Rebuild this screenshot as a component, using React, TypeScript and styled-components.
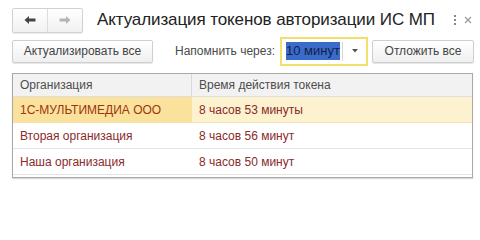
import styled, { createGlobalStyle } from "styled-components";

const GlobalStyle = createGlobalStyle`
    body {
        margin: 0;
        background: #ffffff;
        font-family: Arial, "Liberation Sans", sans-serif;
    }
`;

interface TokenRow {
    org: string;
    time: string;
}

const rows: TokenRow[] = [
    { org: "1С-МУЛЬТИМЕДИА ООО", time: "8 часов 53 минуты" },
    { org: "Вторая организация", time: "8 часов 56 минут" },
    { org: "Наша организация", time: "8 часов 50 минут" },
];

function ArrowIcon({ left, color }: { left?: boolean; color: string }) {
    return (
        <svg width="12" height="10" viewBox="0 0 12 10" style={{ transform: left ? "none" : "scaleX(-1)" }}>
            <path d="M0.5 5 L5 1 L5 3.6 L11.5 3.6 L11.5 6.4 L5 6.4 L5 9 Z" fill={color} />
        </svg>
    );
}

export default function App() {
    return (
        <Page>
            <GlobalStyle />
            <TitleBar>
                <NavGroup>
                    <NavButton><ArrowIcon left color="#444" /></NavButton>
                    <NavButton><ArrowIcon color="#b4b4b4" /></NavButton>
                </NavGroup>
                <Title>Актуализация токенов авторизации ИС МП</Title>
                <WindowTools>
                    <Dots>
                        <i /><i /><i />
                    </Dots>
                    <svg width="8" height="8" viewBox="0 0 8 8">
                        <path d="M1 1 L7 7 M7 1 L1 7" stroke="#9a9a9a" strokeWidth="1.2" />
                    </svg>
                </WindowTools>
            </TitleBar>
            <Toolbar>
                <Button $width={141}>Актуализировать все</Button>
                <Label>Напомнить через:</Label>
                <Combo>
                    <ComboText><Selected>10 минут</Selected></ComboText>
                    <ComboArrow>
                        <svg width="6" height="4" viewBox="0 0 6 4">
                            <path d="M0 0 L6 0 L3 3.5 Z" fill="#555" />
                        </svg>
                    </ComboArrow>
                </Combo>
                <Button $width={102}>Отложить все</Button>
            </Toolbar>
            <Table>
                <HeadRow>
                    <HeadCell $first>Организация</HeadCell>
                    <HeadCell>Время действия токена</HeadCell>
                </HeadRow>
                {rows.map((row, i) => (
                    <Row key={row.org} $current={i === 0}>
                        <Cell $first $current={i === 0}>{row.org}</Cell>
                        <Cell $current={i === 0}>{row.time}</Cell>
                    </Row>
                ))}
                <Filler />
            </Table>
        </Page>
    );
}

const Page = styled.div`
    width: 480px;
    height: 201px;
    padding: 8px 7px 0 12px;
    box-sizing: border-box;
    display: flex;
    flex-direction: column;
    overflow: hidden;
`;

const TitleBar = styled.div`
    display: flex;
    align-items: center;
    height: 24px;
`;

const NavGroup = styled.div`
    display: flex;
    flex-shrink: 0;
    height: 23px;
    border: 1px solid #d2d2d2;
    border-radius: 2px;
    background: linear-gradient(#ffffff, #f1f1f1);
    box-shadow: 0 1px 1px rgba(0, 0, 0, 0.08);
`;

const NavButton = styled.div`
    width: 34px;
    display: flex;
    align-items: center;
    justify-content: center;

    & + & {
        border-left: 1px solid #dcdcdc;
    }
`;

const Title = styled.h1`
    margin: 0 0 0 14px;
    font-size: 17px;
    font-weight: normal;
    color: #222;
    white-space: nowrap;
    letter-spacing: -0.1px;
`;

const WindowTools = styled.div`
    margin-left: auto;
    flex-shrink: 0;
    display: flex;
    align-items: center;
    gap: 8px;
    padding-right: 1px;
`;

const Dots = styled.div`
    display: flex;
    flex-direction: column;
    gap: 2px;

    i {
        display: block;
        width: 2px;
        height: 2px;
        background: #888;
    }
`;

const Toolbar = styled.div`
    display: flex;
    align-items: center;
    margin-top: 4px;
    height: 30px;
    white-space: nowrap;
    font-size: 12px;
`;

const Button = styled.div<{ $width: number }>`
    width: ${(p) => p.$width}px;
    flex-shrink: 0;
    height: 23px;
    box-sizing: border-box;
    border: 1px solid #cfcfcf;
    border-radius: 2px;
    background: linear-gradient(#ffffff, #efefef);
    box-shadow: 0 1px 1px rgba(0, 0, 0, 0.1);
    display: flex;
    align-items: center;
    justify-content: center;
    color: #444;
`;

const Label = styled.span`
    margin-left: 22px;
    flex-shrink: 0;
    color: #4a4a4a;
`;

const Combo = styled.div`
    margin-left: 5px;
    margin-right: 4px;
    width: 88px;
    flex-shrink: 0;
    height: 29px;
    box-sizing: border-box;
    border: 2px solid #f2df6e;
    background: #fff;
    display: flex;
    align-items: stretch;
`;

const ComboText = styled.div`
    flex: 1;
    display: flex;
    align-items: center;
    padding-left: 4px;
    font-size: 13px;
`;

const Selected = styled.span`
    background: #3a6bc8;
    color: #10214a;
    padding: 1px 0;
    line-height: 16px;
`;

const ComboArrow = styled.div`
    width: 23px;
    display: flex;
    align-items: center;
    justify-content: center;
    margin: 3px 0;
    border-left: 1px solid #d6d6d6;
`;

const Table = styled.div`
    margin-top: 7px;
    width: 461px;
    height: 105px;
    box-sizing: border-box;
    border: 1px solid #a9a9a9;
    box-shadow: 0 1px 1px rgba(0, 0, 0, 0.15);
    display: flex;
    flex-direction: column;
    font-size: 12px;
`;

const HeadRow = styled.div`
    display: flex;
    height: 22px;
    background: #f2f2f2;
    border-bottom: 1px solid #dedede;
`;

const HeadCell = styled.div<{ $first?: boolean }>`
    width: ${(p) => (p.$first ? "179px" : "auto")};
    flex: ${(p) => (p.$first ? "none" : "1")};
    box-sizing: border-box;
    padding-left: 7px;
    display: flex;
    align-items: center;
    color: #4d4d4d;
    border-right: ${(p) => (p.$first ? "1px solid #dadada" : "none")};
`;

const Row = styled.div<{ $current: boolean }>`
    display: flex;
    height: 26px;
    box-sizing: border-box;
    border-bottom: 1px solid ${(p) => (p.$current ? "#f3e3b0" : "#e4e4e4")};
`;

const Cell = styled.div<{ $first?: boolean; $current: boolean }>`
    width: ${(p) => (p.$first ? "179px" : "auto")};
    flex: ${(p) => (p.$first ? "none" : "1")};
    box-sizing: border-box;
    padding-left: 7px;
    display: flex;
    align-items: center;
    color: ${(p) => (p.$current && p.$first ? "#9a3510" : "#8a2a2a")};
    background: ${(p) =>
        p.$current ? (p.$first ? "#fbe29c" : "#fdf2cf") : "transparent"};
`;

const Filler = styled.div`
    flex: 1;
`;
